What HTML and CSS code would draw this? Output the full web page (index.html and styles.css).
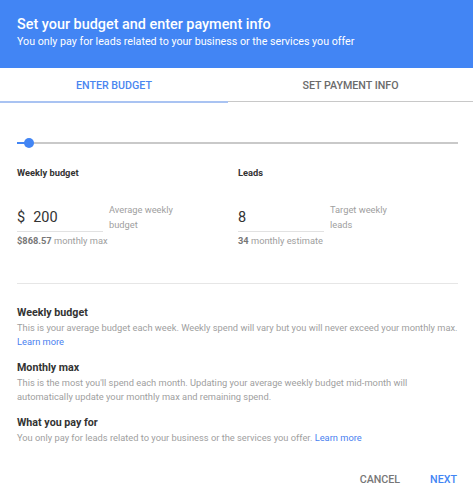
FILE: index.html
```html
<!DOCTYPE html>
<html>
<head>
<meta charset="utf-8">
<link rel="stylesheet" href="styles.css">
</head>
<body>
<div class="dialog">
  <header class="header">
    <div class="title">Set your budget and enter payment info</div>
    <div class="subtitle">You only pay for leads related to your business or the services you offer</div>
  </header>
  <nav class="tabs">
    <div class="tab active">ENTER BUDGET</div>
    <div class="tab">SET PAYMENT INFO</div>
  </nav>
  <main class="content">
    <div class="slider">
      <div class="track"></div>
      <div class="fill"></div>
      <div class="thumb"></div>
    </div>
    <div class="fields">
      <div class="field">
        <div class="field-label">Weekly budget</div>
        <div class="field-row">
          <div class="input"><span class="prefix">$</span>200</div>
          <div class="hint">Average weekly budget</div>
        </div>
        <div class="note"><b>$868.57</b> monthly max</div>
      </div>
      <div class="field">
        <div class="field-label">Leads</div>
        <div class="field-row">
          <div class="input">8</div>
          <div class="hint">Target weekly leads</div>
        </div>
        <div class="note"><b>34</b> monthly estimate</div>
      </div>
    </div>
    <hr class="divider">
    <section class="info">
      <h3>Weekly budget</h3>
      <p>This is your average budget each week. Weekly spend will vary but you will never exceed your monthly max.<br><a href="#">Learn more</a></p>
    </section>
    <section class="info">
      <h3>Monthly max</h3>
      <p>This is the most you'll spend each month. Updating your average weekly budget mid-month will automatically update your monthly max and remaining spend.</p>
    </section>
    <section class="info">
      <h3>What you pay for</h3>
      <p>You only pay for leads related to your business or the services you offer. <a href="#">Learn more</a></p>
    </section>
  </main>
  <footer class="actions">
    <button class="btn cancel">CANCEL</button>
    <button class="btn next">NEXT</button>
  </footer>
</div>
</body>
</html>
```
FILE: styles.css
```css
html, body {
  margin: 0;
  padding: 0;
  background: #fff;
}
body {
  font-family: Roboto, "Liberation Sans", sans-serif;
  color: #333;
}
.dialog {
  width: 473px;
}
.header {
  background: #4285f4;
  color: #fff;
  height: 68px;
  box-sizing: border-box;
  padding: 16px 17px 0;
}
.title {
  font-size: 14.4px;
  font-weight: 500;
  line-height: 18px;
}
.subtitle {
  font-size: 10.7px;
  line-height: 14px;
  margin-top: 1px;
}
.tabs {
  display: grid;
  grid-template-columns: 228px 1fr;
  height: 35px;
}
.tab {
  font-size: 10.7px;
  font-weight: 500;
  color: #6b6b6b;
  display: flex;
  align-items: center;
  justify-content: center;
  border-bottom: 1px solid #c8c8c8;
  margin-bottom: 1px;
  padding-top: 1px;
}
.tab.active {
  color: #4a86f0;
  border-bottom: 2px solid #a9c3f2;
  margin-bottom: 0;
}
.content {
  padding: 0 15px 0 17px;
}
.slider {
  position: relative;
  height: 10px;
  margin-top: 35px;
}
.track {
  position: absolute;
  left: 0;
  right: 0;
  top: 4px;
  height: 2px;
  background: #c9c9c9;
}
.fill {
  position: absolute;
  left: 0;
  width: 10px;
  top: 4px;
  height: 2px;
  background: #4285f4;
}
.thumb {
  position: absolute;
  left: 7px;
  top: 0;
  width: 10px;
  height: 10px;
  border-radius: 50%;
  background: #4285f4;
}
.fields {
  display: grid;
  grid-template-columns: 221px 1fr;
  margin-top: 19px;
}
.field-label {
  font-size: 9.3px;
  font-weight: 700;
  color: #333;
  line-height: 12px;
}
.field-row {
  display: flex;
  align-items: flex-start;
  margin-top: 30px;
}
.input {
  width: 86px;
  font-size: 14.5px;
  color: #333;
  line-height: 18px;
  padding-bottom: 4px;
  border-bottom: 1px solid #e2e2e2;
}
.prefix {
  margin-right: 8px;
}
.hint {
  font-size: 9.3px;
  color: #a0a0a0;
  line-height: 15px;
  margin-left: 6px;
  width: 80px;
  margin-top: -7px;
}
.note {
  font-size: 9.3px;
  color: #9e9e9e;
  line-height: 12px;
  margin-top: 3px;
}
.note b {
  color: #777;
  font-weight: 700;
}
.divider {
  border: 0;
  border-top: 1px solid #e6e6e6;
  margin: 36px 0 0;
}
.info {
  margin-top: 22px;
}
.info + .info {
  margin-top: 12px;
}
.info h3 {
  margin: 0;
  font-size: 10.7px;
  font-weight: 700;
  color: #333;
  line-height: 14px;
}
.info p {
  margin: 1px 0 0;
  font-size: 9.3px;
  color: #a0a0a0;
  line-height: 14px;
}
.info a {
  color: #4a7ff0;
  text-decoration: none;
}
.actions {
  display: flex;
  justify-content: flex-end;
  gap: 30px;
  padding: 28px 16px 0 0;
}
.btn {
  font-family: Roboto, "Liberation Sans", sans-serif;
  background: none;
  border: 0;
  padding: 0;
  font-size: 10.7px;
  font-weight: 500;
  line-height: 14px;
  cursor: pointer;
}
.btn.cancel {
  color: #777;
}
.btn.next {
  color: #4285f4;
}
```
